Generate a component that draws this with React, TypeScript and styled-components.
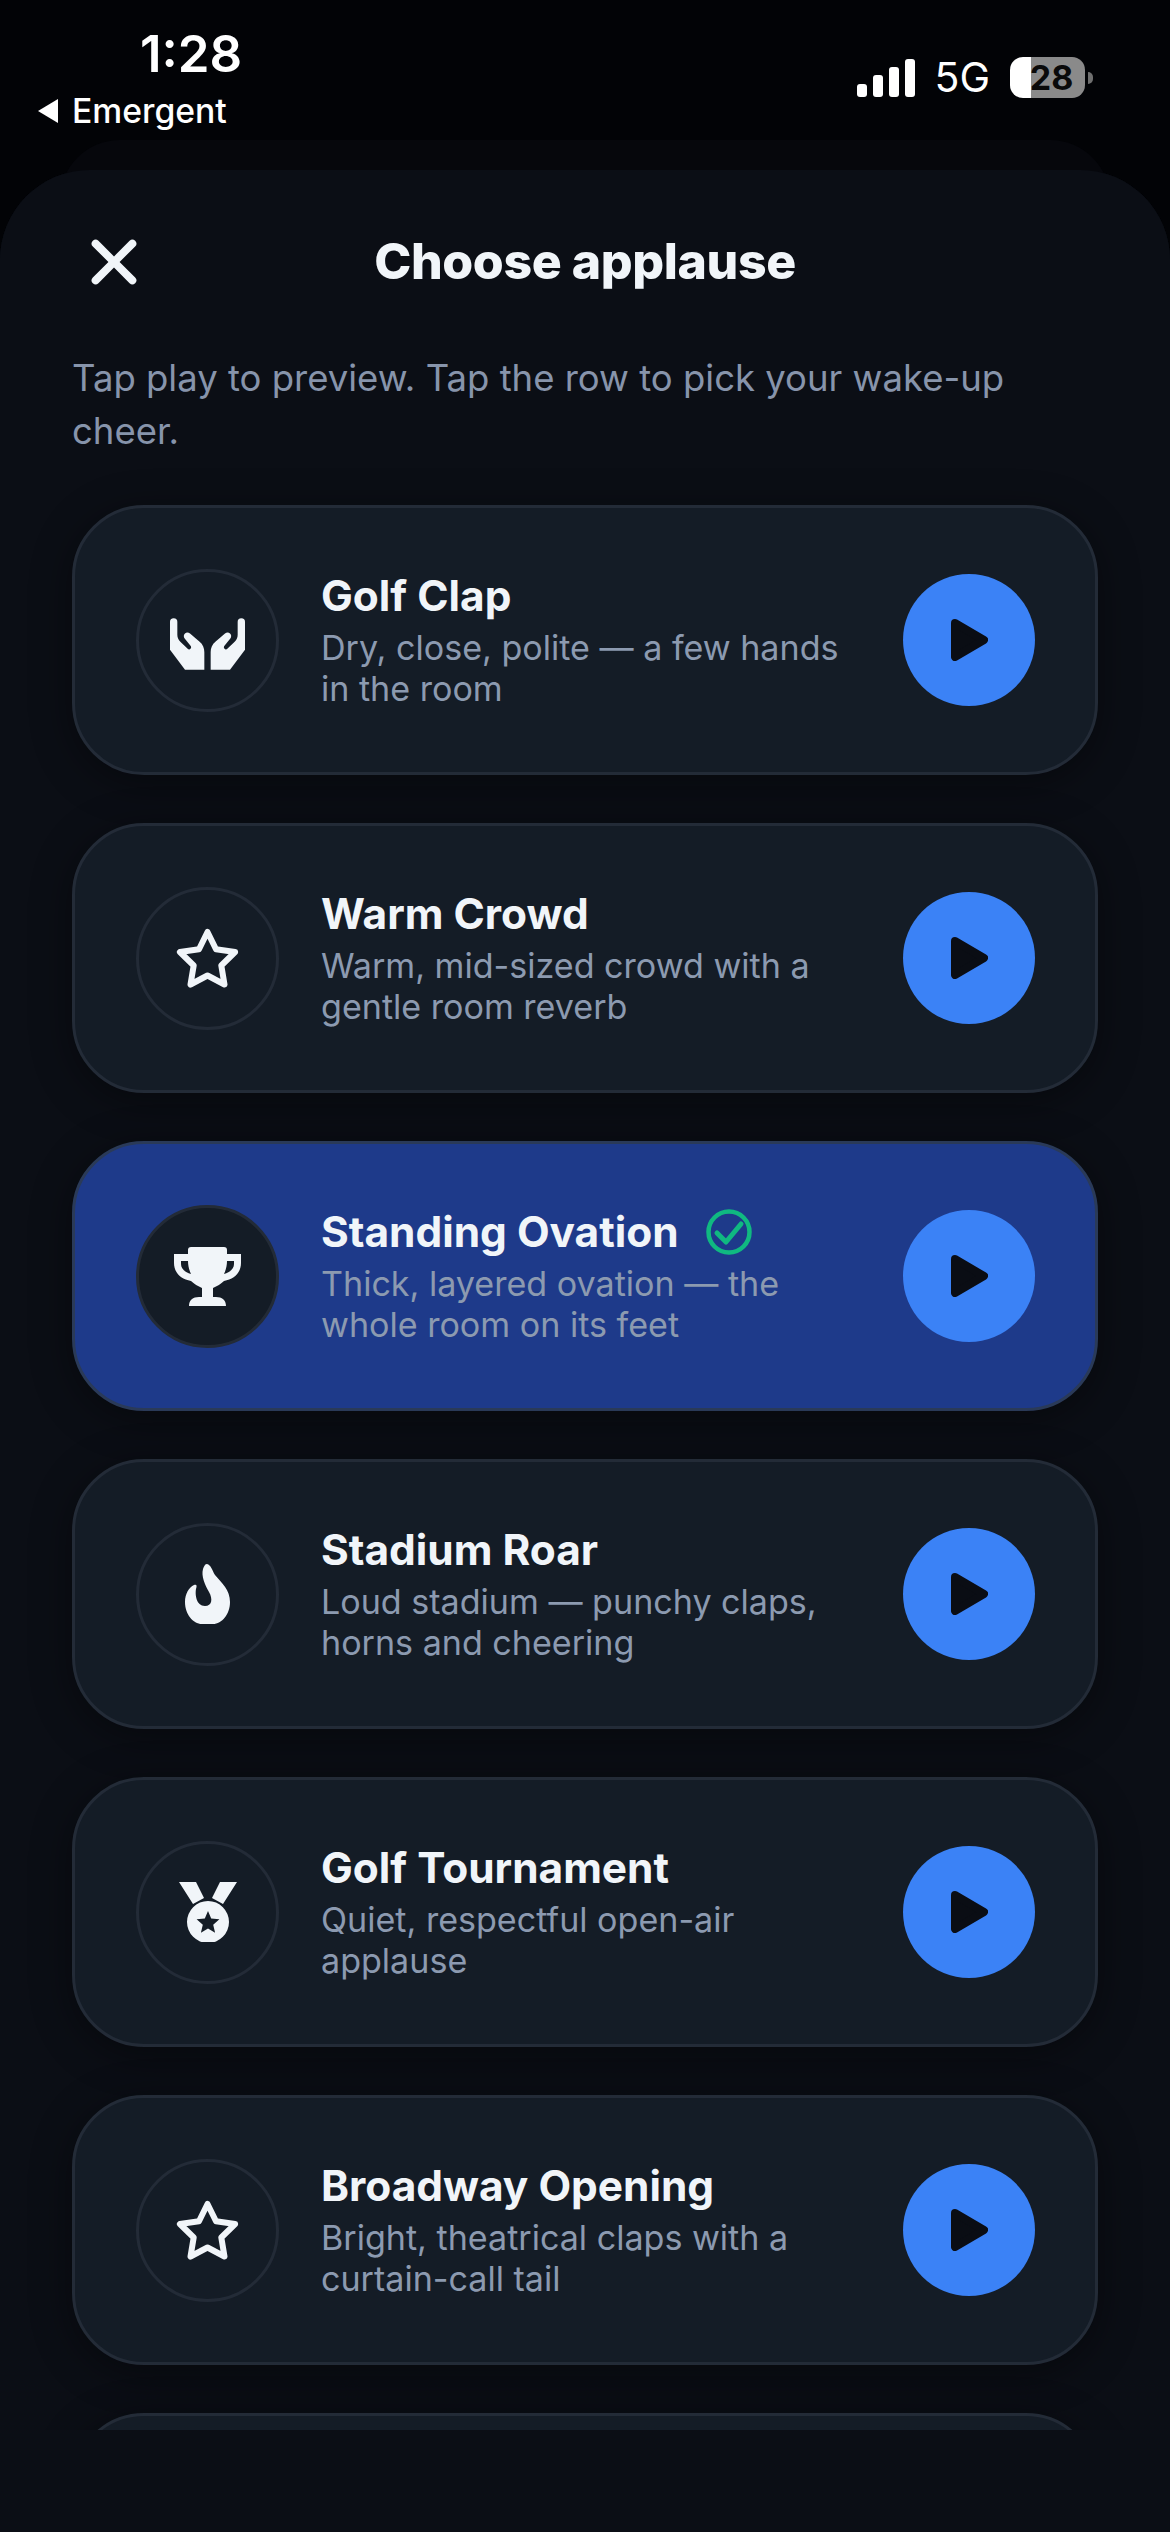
import { FC, ReactNode } from "react";
import styled, { createGlobalStyle } from "styled-components";
import { IoClose } from "react-icons/io5";

const GlobalStyle = createGlobalStyle`
  html, body {
    margin: 0;
    background: #020306;
  }
  * {
    box-sizing: border-box;
  }
`;

const Page = styled.div`
  width: 1170px;
  height: 2532px;
  overflow: hidden;
  background: #020306;
  display: flex;
  flex-direction: column;
  font-family: Inter, "Liberation Sans", sans-serif;
  color: #f1f5f9;
`;

const StatusBar = styled.div`
  height: 170px;
  flex-shrink: 0;
  display: flex;
  justify-content: space-between;
  color: #fff;
`;

const StatusLeft = styled.div`
  padding: 26px 0 0 38px;
  display: flex;
  flex-direction: column;
`;

const Clock = styled.div`
  font-size: 51px;
  line-height: 56px;
  font-weight: 600;
  padding-left: 102px;
`;

const BackLink = styled.div`
  margin-top: 9px;
  display: flex;
  align-items: center;
  gap: 14px;
  font-size: 33.7px;
  line-height: 40px;
  font-weight: 500;
`;

const BackArrow = styled.span`
  width: 20px;
  height: 24px;
  background: #fff;
  clip-path: polygon(100% 0, 100% 100%, 0 50%);
`;

const StatusRight = styled.div`
  padding: 57px 85px 0 0;
  display: flex;
  align-items: center;
  align-self: flex-start;
`;

const Signal = styled.svg`
  width: 58px;
  height: 38px;
  display: block;
`;

const Network = styled.span`
  margin-left: 19px;
  font-size: 41px;
  line-height: 41px;
  font-weight: 400;
`;

const Battery = styled.div`
  margin-left: 20px;
  width: 75px;
  height: 41px;
  border-radius: 13px;
  background: linear-gradient(to right, #fff 0 21px, #8a8a8a 21px);
  color: #0a0a0a;
  font-size: 34px;
  line-height: 41px;
  font-weight: 700;
  text-align: center;
  padding-left: 8px;
  position: relative;

  &::after {
    content: "";
    position: absolute;
    right: -8px;
    top: 15px;
    width: 5px;
    height: 12px;
    border-radius: 0 6px 6px 0;
    background: #6f6f6f;
  }
`;

const Sheet = styled.div`
  position: relative;
  flex: 1;
  min-height: 0;
  background: #0b0e15;
  border-radius: 90px 90px 0 0;
  padding: 50px 0 0;
  display: flex;
  flex-direction: column;

  &::before {
    content: "";
    position: absolute;
    top: -30px;
    left: 60px;
    right: 60px;
    height: 90px;
    border-radius: 60px 60px 0 0;
    background: #06070c;
    z-index: 0;
  }

  &::after {
    content: "";
    position: absolute;
    inset: 0;
    border-radius: 90px 90px 0 0;
    background: #0b0e15;
    z-index: 0;
  }

  & > * {
    position: relative;
    z-index: 1;
  }
`;

const SheetHeader = styled.div`
  display: grid;
  grid-template-columns: 1fr auto 1fr;
  align-items: center;
  padding: 0 72px;
  height: 84px;
`;

const CloseButton = styled.div`
  width: 84px;
  height: 84px;
  display: flex;
  align-items: center;
  justify-content: center;
  color: #f1f5f9;
`;

const SheetTitle = styled.h1`
  margin: 0;
  font-size: 50px;
  line-height: 56px;
  font-weight: 800;
  letter-spacing: -0.4px;
  color: #f1f5f9;
  transform: translateY(-1px);
`;

const Hint = styled.p`
  margin: 48px 72px 0;
  font-size: 36.5px;
  line-height: 53px;
  font-weight: 400;
  color: #8794ab;
`;

const ListClip = styled.div`
  height: 1972px;
  flex-shrink: 0;
  overflow: hidden;
  padding: 47px 72px 0;
  display: flex;
  flex-direction: column;
  gap: 48px;
`;

const Row = styled.div<{ $selected?: boolean }>`
  flex-shrink: 0;
  height: 270px;
  border-radius: 72px;
  border: 3px solid ${(p) => (p.$selected ? "#2a3a58" : "#232b37")};
  background: ${(p) => (p.$selected ? "#1e3a8a" : "#141c26")};
  box-shadow: 0 8px 40px rgba(0, 0, 0, 0.4);
  padding: 0 60px 0 61px;
  display: flex;
  align-items: center;
`;

const IconCircle = styled.div`
  width: 143px;
  height: 143px;
  flex-shrink: 0;
  border-radius: 50%;
  border: 3px solid #232b37;
  background: #141c26;
  display: flex;
  align-items: center;
  justify-content: center;
  color: #f1f5f9;
`;

const RowText = styled.div`
  flex: 1;
  min-width: 0;
  margin: 0 40px 0 42px;
`;

const RowTitle = styled.div`
  display: flex;
  align-items: center;
  gap: 27px;
  font-size: 42.4px;
  line-height: 50px;
  font-weight: 700;
  color: #f1f5f9;
`;

const RowDesc = styled.div`
  margin-top: 6px;
  font-size: 34.1px;
  line-height: 41px;
  font-weight: 400;
  color: #8c9ab0;
`;

const Glyph = styled.svg<{ $nudge?: number }>`
  display: block;
  flex-shrink: 0;
  margin-top: ${(p) => p.$nudge ?? 0}px;
`;

const PlayButton = styled.div`
  width: 132px;
  height: 132px;
  flex-shrink: 0;
  border-radius: 50%;
  background: #3b82f6;
  display: flex;
  align-items: center;
  justify-content: center;
  color: #0a0d14;
`;

const HandsIcon = () => (
  <Glyph $nudge={8} width="75" height="52" viewBox="0 0 225 155" fill="currentColor">
    <path d="M0 11a11 11 0 0 1 22 0v39c0 8 3 15 9 21l22 21c3 3 7 2 9-1 2-3 2-6-1-9L44 61c-4-5-3-11 1-15 4-4 10-4 15 0l28 24c11 9 15 20 15 32v53H45L0 95z" />
    <path d="M225 11a11 11 0 0 0-22 0v39c0 8-3 15-9 21l-22 21c-3 3-7 2-9-1-2-3-2-6 1-9l17-21c4-5 3-11-1-15-4-4-10-4-15 0l-28 24c-11 9-15 20-15 32v53h58l45-60z" />
  </Glyph>
);

const StarIcon = () => (
  <Glyph width="63" height="60" viewBox="0 0 63 60" fill="none" stroke="currentColor" strokeWidth="6" strokeLinejoin="round">
    <path d="M31.5 4 40 21.3 59.1 24 45.3 37.5 48.5 56.5 31.5 47.5 14.5 56.5 17.7 37.5 3.9 24 23 21.3Z" />
  </Glyph>
);

const TrophyIcon = () => (
  <Glyph width="67" height="59" viewBox="0 0 67 59" fill="currentColor" fillRule="evenodd">
    <path d="M17 0H50a3 3 0 0 1 3 3v4H67v9c0 10-7 16-17 18-3 3-7 5-11 7v9h3c6 0 10 3 10 9H15c0-6 4-9 10-9h3V41c-4-2-8-4-11-7C7 32 0 26 0 16V7H14V3a3 3 0 0 1 3-3zM7 14v3c0 4 3 8 10 10-2-4-3-9-3-13zM60 14v3c0 4-3 8-10 10 2-4 3-9 3-13z" />
  </Glyph>
);

const FlameIcon = () => (
  <Glyph width="45" height="60" viewBox="0 0 45 60" fill="currentColor">
    <path d="M22 0C26 1 27 6 30 11 37 19 45 26 45 38 45 50 37 60 28 60H17C8 60 0 50 0 38 0 30 4 23 9 21 12 20 12 22 11 25 10 30 11 42 20 42 27 42 28 35 24 28 20 21 16 12 18 5 19 2 20 0 22 0Z" />
  </Glyph>
);

const MedalIcon = () => (
  <Glyph width="60" height="60" viewBox="0 0 60 60" fill="currentColor" fillRule="evenodd">
    <path d="M1 0H18L26 16 15 22ZM42 0H59L45 22 34 16Z" />
    <path d="M30 19a21 21 0 1 1 0 42 21 21 0 1 1 0-42zM30 29 26.8 36.55 18.6 37.3 24.8 42.7 22.9 50.7 30 46.5 37.1 50.7 35.2 42.7 41.4 37.3 33.2 36.55Z" />
  </Glyph>
);

const CheckIcon = () => (
  <Glyph width="46" height="46" viewBox="0 0 46 46" fill="none" stroke="#10b981" strokeWidth="4.5" strokeLinecap="round" strokeLinejoin="round">
    <circle cx="23" cy="23" r="20.5" />
    <path d="M11 24 20 33 35 15" strokeWidth="5" />
  </Glyph>
);

const PlayIcon = () => (
  <Glyph width="37" height="42" viewBox="0 0 37 42" fill="currentColor" stroke="currentColor" strokeWidth="8" strokeLinejoin="round">
    <path d="M4 4 33 21 4 38Z" />
  </Glyph>
);

const SignalBars = () => (
  <Signal viewBox="0 0 58 38" fill="#fff">
    <rect x="0" y="25" width="10" height="13" rx="3" />
    <rect x="16" y="16" width="10" height="22" rx="3" />
    <rect x="32" y="8" width="10" height="30" rx="3" />
    <rect x="48" y="0" width="10" height="38" rx="3" />
  </Signal>
);

type Sound = {
  title?: string;
  desc?: string;
  icon?: ReactNode;
  selected?: boolean;
};

const sounds: Sound[] = [
  { title: "Golf Clap", desc: "Dry, close, polite — a few hands in the room", icon: <HandsIcon /> },
  { title: "Warm Crowd", desc: "Warm, mid-sized crowd with a gentle room reverb", icon: <StarIcon /> },
  {
    title: "Standing Ovation",
    desc: "Thick, layered ovation — the whole room on its feet",
    icon: <TrophyIcon />,
    selected: true,
  },
  { title: "Stadium Roar", desc: "Loud stadium — punchy claps, horns and cheering", icon: <FlameIcon /> },
  { title: "Golf Tournament", desc: "Quiet, respectful open-air applause", icon: <MedalIcon /> },
  { title: "Broadway Opening", desc: "Bright, theatrical claps with a curtain-call tail", icon: <StarIcon /> },
  {},
];

const SoundRow: FC<Sound> = ({ title, desc, icon, selected }) => (
  <Row $selected={selected}>
    {icon && <IconCircle>{icon}</IconCircle>}
    <RowText>
      <RowTitle>
        {title}
        {selected && <CheckIcon />}
      </RowTitle>
      <RowDesc>{desc}</RowDesc>
    </RowText>
    {icon && (
      <PlayButton>
        <PlayIcon />
      </PlayButton>
    )}
  </Row>
);

const App: FC = () => (
  <Page>
    <GlobalStyle />
    <StatusBar>
      <StatusLeft>
        <Clock>1:28</Clock>
        <BackLink>
          <BackArrow />
          Emergent
        </BackLink>
      </StatusLeft>
      <StatusRight>
        <SignalBars />
        <Network>5G</Network>
        <Battery>28</Battery>
      </StatusRight>
    </StatusBar>
    <Sheet>
      <SheetHeader>
        <CloseButton>
          <IoClose size={84} />
        </CloseButton>
        <SheetTitle>Choose applause</SheetTitle>
      </SheetHeader>
      <Hint>Tap play to preview. Tap the row to pick your wake-up cheer.</Hint>
      <ListClip>
        {sounds.map((s, i) => (
          <SoundRow key={i} {...s} />
        ))}
      </ListClip>
    </Sheet>
  </Page>
);

export default App;
